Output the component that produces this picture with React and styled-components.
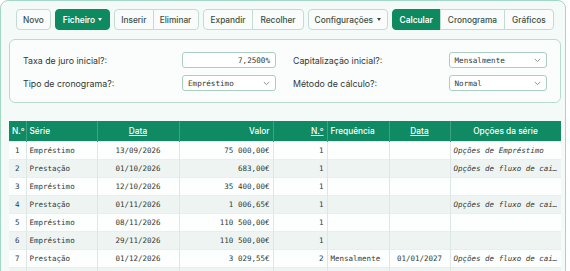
import React from "react";
import styled, { createGlobalStyle, css } from "styled-components";

const Global = createGlobalStyle`
  html, body { margin: 0; padding: 0; background: #ffffff; }
  body { font-family: Inter, "Noto Sans", sans-serif; color: #2c3e38; }
  * { box-sizing: border-box; }
`;

const Frame = styled.div`
  width: 566px;
  height: 290px;
  border: 1.5px solid #a3d8c4;
  border-radius: 8px;
  background: #f4faf8;
  padding: 8px 4px 0 8px;
  overflow: hidden;
`;

const Toolbar = styled.div`
  display: flex;
  align-items: center;
  gap: 4px;
  padding-left: 6.5px;
  height: 21px;
`;

const Btn = styled.button`
  height: 20.5px;
  padding: 0 ${(p) => p.$px ?? 7}px;
  font-family: Inter, sans-serif;
  font-size: 8.3px;
  font-weight: 500;
  color: ${(p) => (p.$primary ? "#ffffff" : "#3b4f47")};
  background: ${(p) => (p.$primary ? "#0d8a5f" : "#f9fcfb")};
  border: 1px solid ${(p) => (p.$primary ? "#0d8a5f" : "#c3dcd2")};
  border-radius: 4px;
  display: inline-flex;
  align-items: center;
  gap: 3.5px;
  cursor: pointer;
  white-space: nowrap;
  ${(p) => p.$primary && css`font-weight: 600;`}
`;

const Group = styled.div`
  display: flex;
  & > ${Btn} {
    border-radius: 0;
  }
  & > ${Btn} + ${Btn} {
    margin-left: -1px;
  }
  & > ${Btn}:first-child {
    border-radius: 4px 0 0 4px;
  }
  & > ${Btn}:last-child {
    border-radius: 0 4px 4px 0;
  }
`;

const Caret = styled.span`
  width: 0;
  height: 0;
  border-left: 2.5px solid transparent;
  border-right: 2.5px solid transparent;
  border-top: 3px solid ${(p) => (p.$light ? "#ffffff" : "#3b4f47")};
`;

const Panel = styled.div`
  margin-top: 8.5px;
  width: 551.5px;
  background: #fbfdfc;
  border: 1px solid #b7dccd;
  border-radius: 6px;
  padding: 12.5px 13px 11px 13px;
  display: grid;
  grid-template-columns: 253px 254px;
  column-gap: 17px;
  row-gap: 7px;
`;

const Field = styled.div`
  display: flex;
  align-items: center;
  justify-content: space-between;
  height: 16px;
`;

const Label = styled.span`
  font-family: Inter, sans-serif;
  font-size: 8.8px;
  color: #2f3a36;
`;

const Box = styled.div`
  width: ${(p) => p.$w}px;
  height: 16px;
  border: 1px solid #a9cfc1;
  border-radius: 3px;
  background: #ffffff;
  font-family: "DejaVu Sans Mono", monospace;
  font-size: 7.6px;
  color: #2f3a36;
  display: flex;
  align-items: center;
  justify-content: ${(p) => (p.$right ? "flex-end" : "space-between")};
  padding: 0 5px 0 5px;
`;

const Chevron = () => (
  <svg width="7" height="5" viewBox="0 0 7 5">
    <path d="M0.8 1 L3.5 3.6 L6.2 1" fill="none" stroke="#7b8a85" strokeWidth="0.9" />
  </svg>
);

const Table = styled.table`
  margin-top: 18px;
  width: 551.5px;
  border-collapse: collapse;
  table-layout: fixed;
`;

const Th = styled.th`
  height: 20px;
  background: #0f8a62;
  color: #ffffff;
  font-family: Inter, sans-serif;
  font-size: 8.3px;
  font-weight: 500;
  padding: 0 3px;
  text-align: ${(p) => p.$align || "left"};
  text-decoration: ${(p) => (p.$u ? "underline" : "none")};
  border-left: 1px solid #3aa480;
  white-space: nowrap;
  &:first-child { border-left: none; }
`;

const Tr = styled.tr`
  background: ${(p) => (p.$alt ? "#eef4f1" : "#fdfefe")};
`;

const Td = styled.td`
  height: 18px;
  padding: 0 3px;
  font-family: "DejaVu Sans Mono", monospace;
  font-size: 7.5px;
  color: #333a37;
  text-align: ${(p) => p.$align || "left"};
  font-style: ${(p) => (p.$i ? "italic" : "normal")};
  border-left: 1px solid #dde7e3;
  border-top: 1px solid #e8efec;
  white-space: nowrap;
  overflow: hidden;
  text-overflow: ellipsis;
  &:first-child { border-left: none; text-align: center; }
`;

const cols = [17, 71, 82, 94, 54, 62, 61, 110.5];

const rows = [
  ["1", "Empréstimo", "13/09/2026", "75 000,00€", "1", "", "", "Opções de Empréstimo"],
  ["2", "Prestação", "01/10/2026", "683,00€", "1", "", "", "Opções de fluxo de caixa"],
  ["3", "Empréstimo", "12/10/2026", "35 400,00€", "1", "", "", ""],
  ["4", "Prestação", "01/11/2026", "1 006,65€", "1", "", "", "Opções de fluxo de caixa"],
  ["5", "Empréstimo", "08/11/2026", "110 500,00€", "1", "", "", ""],
  ["6", "Empréstimo", "29/11/2026", "110 500,00€", "1", "", "", ""],
  ["7", "Prestação", "01/12/2026", "3 029,55€", "2", "Mensalmente", "01/01/2027", "Opções de fluxo de caixa"],
  ["", "", "", "", "", "", "", ""],
];

const aligns = ["center", "left", "center", "right", "right", "left", "center", "left"];

export default function App() {
  return (
    <>
      <Global />
      <Frame>
        <Toolbar>
          <Btn $px={6.5}>Novo</Btn>
          <Btn $primary $px={6.5}>
            Ficheiro <Caret $light />
          </Btn>
          <Group>
            <Btn $px={6.2}>Inserir</Btn>
            <Btn $px={6.2}>Eliminar</Btn>
          </Group>
          <Group>
            <Btn>Expandir</Btn>
            <Btn>Recolher</Btn>
          </Group>
          <Btn $px={6}>
            Configurações <Caret />
          </Btn>
          <Group>
            <Btn $primary>Calcular</Btn>
            <Btn>Cronograma</Btn>
            <Btn>Gráficos</Btn>
          </Group>
        </Toolbar>

        <Panel>
          <Field>
            <Label>Taxa de juro inicial?:</Label>
            <Box $w={94} $right>7,2500%</Box>
          </Field>
          <Field>
            <Label>Capitalização inicial?:</Label>
            <Box $w={98.5}>
              Mensalmente <Chevron />
            </Box>
          </Field>
          <Field>
            <Label>Tipo de cronograma?:</Label>
            <Box $w={94}>
              Empréstimo <Chevron />
            </Box>
          </Field>
          <Field>
            <Label>Método de cálculo?:</Label>
            <Box $w={98.5}>
              Normal <Chevron />
            </Box>
          </Field>
        </Panel>

        <Table>
          <colgroup>
            {cols.map((w, i) => (
              <col key={i} style={{ width: w }} />
            ))}
          </colgroup>
          <thead>
            <tr>
              <Th>N.º</Th>
              <Th>Série</Th>
              <Th $align="center" $u>Data</Th>
              <Th $align="right">Valor</Th>
              <Th $align="right" $u>N.º</Th>
              <Th>Frequência</Th>
              <Th $align="center" $u>Data</Th>
              <Th $align="center">Opções da série</Th>
            </tr>
          </thead>
          <tbody>
            {rows.map((r, ri) => (
              <Tr key={ri} $alt={ri % 2 === 1}>
                {r.map((c, ci) => (
                  <Td key={ci} $align={aligns[ci]} $i={ci === 7}>
                    {c}
                  </Td>
                ))}
              </Tr>
            ))}
          </tbody>
        </Table>
      </Frame>
    </>
  );
}
